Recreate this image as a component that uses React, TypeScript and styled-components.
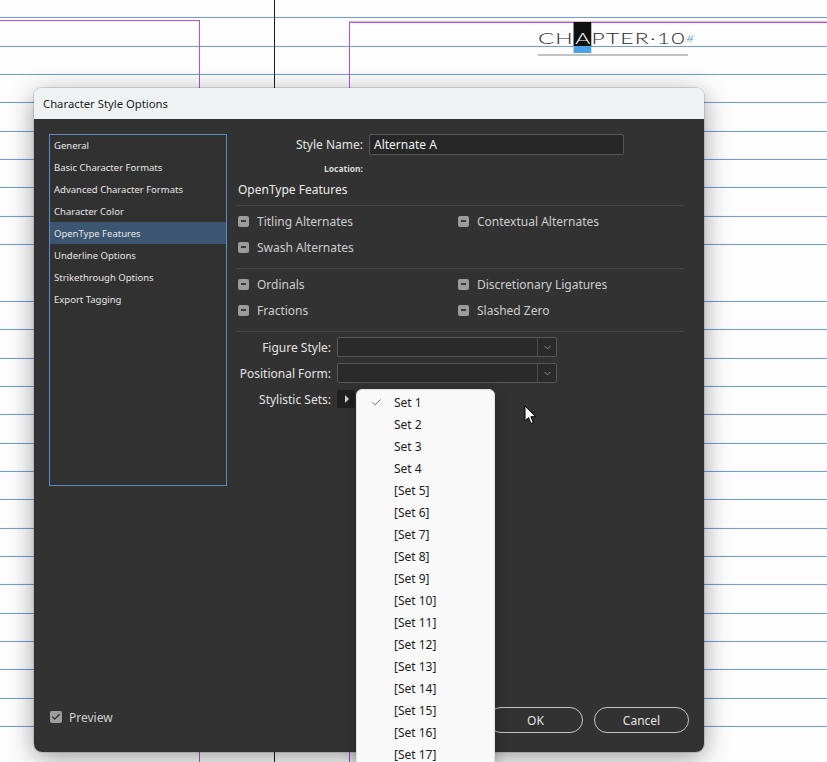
import styled, { createGlobalStyle } from 'styled-components';
import { Check, ChevronDown } from 'lucide-react';

const GlobalStyle = createGlobalStyle`
  html, body {
    margin: 0;
    padding: 0;
    height: 100%;
    overflow: hidden;
    background: #fdfdfd;
  }
  #root {
    height: 762px;
  }
`;

const uiFont = `'Noto Sans', 'Open Sans', 'Liberation Sans', sans-serif`;

const Desktop = styled.div`
  position: relative;
  width: 827px;
  height: 762px;
  overflow: hidden;
  background-color: #fdfdfd;
  background-image: repeating-linear-gradient(
    to bottom,
    transparent 0,
    transparent 27.35px,
    #6a97de 27.35px,
    #6a97de 28.35px
  );
  background-position: 0 -10.05px;
  font-family: ${uiFont};
`;

// page frames on the pasteboard (free canvas)
const PageFrame = styled.div<{ $left: number; $top: number; $width: number; $side: 'left' | 'right' }>`
  position: absolute;
  left: ${(p) => p.$left}px;
  top: ${(p) => p.$top}px;
  width: ${(p) => p.$width}px;
  bottom: -2px;
  border-top: 1px solid #b84fe3;
  ${(p) => (p.$side === 'left' ? 'border-right: 1px solid #b84fe3;' : 'border-left: 1px solid #b84fe3;')}
  ${(p) => (p.$side === 'right' ? 'box-shadow: 0 -1px 0 rgba(226, 122, 150, 0.55);' : '')}
`;

const Spine = styled.div`
  position: absolute;
  left: 274px;
  top: 0;
  bottom: 0;
  width: 1px;
  background: #1b1b1b;
`;

const ChapterHeading = styled.div`
  position: absolute;
  left: 538px;
  top: 26px;
  display: flex;
  flex-direction: column;
  align-items: flex-start;
`;

const ChapterText = styled.div`
  font-family: Lato, 'Liberation Sans', sans-serif;
  font-weight: 300;
  font-size: 15.5px;
  letter-spacing: 0.8px;
  line-height: 24px;
  color: #2b2b2b;
  white-space: nowrap;
  display: flex;
  align-items: flex-end;
  transform: scaleX(1.48);
  transform-origin: left center;
`;

const ChapterCap = styled.span`
  font-size: 16px;
`;

const SelectedGlyph = styled.span`
  display: inline-block;
  background: linear-gradient(#101010 0 79%, #4ba2e8 79%);
  color: #fff;
  padding: 4px 0 3px 1px;
  margin: -4px 0 -3px;
  line-height: 24px;
`;

const PilcrowMark = styled.span`
  font-size: 10px;
  color: #4a8fe0;
  letter-spacing: 0;
`;

const ChapterRule = styled.div`
  margin-top: 4px;
  width: 150px;
  height: 2px;
  background: #c2c2c2;
`;

const Dialog = styled.div`
  position: absolute;
  left: 34px;
  top: 88px;
  width: 670px;
  height: 664px;
  border-radius: 8px;
  overflow: hidden;
  display: flex;
  flex-direction: column;
  box-shadow: 0 6px 26px rgba(0, 0, 0, 0.38), 0 0 0 1px rgba(0, 0, 0, 0.12);
`;

const TitleBar = styled.div`
  height: 31px;
  flex: none;
  display: flex;
  align-items: center;
  padding-left: 9px;
  background: #eff2f3;
  color: #1c1c1c;
  font-size: 11.3px;
`;

const DialogBody = styled.div`
  flex: 1;
  background: #323232;
  display: flex;
  flex-direction: column;
  padding: 15px 20px 19px 15px;
`;

const MainRow = styled.div`
  display: flex;
  gap: 9px;
`;

const CategoryList = styled.ul`
  list-style: none;
  margin: 0;
  padding: 0;
  width: 178px;
  height: 352px;
  box-sizing: border-box;
  border: 1px solid #5d8cc4;
  background: #313131;
`;

const CategoryItem = styled.li<{ $active?: boolean }>`
  height: 22px;
  display: flex;
  align-items: center;
  padding-left: 4px;
  font-size: 9.5px;
  color: #e6e6e6;
  background: ${(p) => (p.$active ? '#3c5570' : 'transparent')};
  &:first-child {
    margin-top: -1px;
  }
`;

const OptionsPanel = styled.div`
  flex: 1;
  display: flex;
  flex-direction: column;
`;

const FieldRow = styled.div<{ $labelWidth: number }>`
  display: grid;
  grid-template-columns: ${(p) => p.$labelWidth}px auto;
  column-gap: 6px;
  align-items: center;
`;

const FieldLabel = styled.span`
  text-align: right;
  font-size: 12px;
  color: #e2e2e2;
  white-space: nowrap;
`;

const NameInput = styled.div`
  width: 255px;
  height: 21px;
  box-sizing: border-box;
  border: 1px solid #585858;
  border-radius: 2px;
  background: #272727;
  color: #f0f0f0;
  font-size: 12px;
  display: flex;
  align-items: center;
  padding-left: 4px;
`;

const LocationLabel = styled.div`
  width: 127px;
  margin-top: 8px;
  height: 12px;
  line-height: 12px;
  text-align: right;
  font-size: 8.5px;
  font-weight: 700;
  color: #dadada;
`;

const SectionHeading = styled.div`
  margin-top: 7px;
  padding-left: 2px;
  line-height: 16px;
  font-size: 12px;
  color: #ececec;
`;

const Divider = styled.div<{ $gap?: number }>`
  height: 1px;
  margin-top: ${(p) => p.$gap ?? 0}px;
  background: #474747;
`;

const FeatureGrid = styled.div`
  display: grid;
  grid-template-columns: 220px 1fr;
  grid-auto-rows: 26px;
  padding: 2px 0 8px 2px;
`;

const FeatureItem = styled.div`
  display: flex;
  align-items: center;
  gap: 8px;
  font-size: 12px;
  color: #cdcdcd;
`;

const MixedBox = styled.span`
  width: 11px;
  height: 11px;
  border-radius: 2px;
  background: #9b9b9b;
  display: flex;
  align-items: center;
  justify-content: center;
  &::after {
    content: '';
    width: 5px;
    height: 2px;
    background: #3a3a3a;
  }
`;

const FormStack = styled.div`
  margin-top: 5px;
  display: flex;
  flex-direction: column;
  gap: 6px;
`;

const SelectBox = styled.div`
  width: 220px;
  height: 20px;
  box-sizing: border-box;
  border: 1px solid #575757;
  border-radius: 2px;
  background: #2a2a2a;
  display: flex;
  justify-content: flex-end;
`;

const SelectChevron = styled.span`
  width: 18px;
  border-left: 1px solid #4a4a4a;
  display: flex;
  align-items: center;
  justify-content: center;
  color: #b5b5b5;
`;

const DisclosureButton = styled.span`
  width: 18px;
  height: 18px;
  border-radius: 2px;
  background: #1f1f1f;
  display: flex;
  align-items: center;
  justify-content: center;
  &::after {
    content: '';
    border-left: 4px solid #cfcfcf;
    border-top: 4px solid transparent;
    border-bottom: 4px solid transparent;
    margin-left: 1px;
  }
`;

const FooterRow = styled.div`
  margin-top: auto;
  margin-right: -5px;
  height: 26px;
  display: flex;
  align-items: center;
  justify-content: space-between;
`;

const PreviewToggle = styled.label`
  display: flex;
  align-items: center;
  gap: 7px;
  margin: 0 0 6px 1px;
  font-size: 12px;
  color: #cfcfcf;
`;

const CheckedBox = styled.span`
  width: 12px;
  height: 12px;
  border-radius: 2px;
  background: #9d9d9d;
  color: #2f2f2f;
  display: flex;
  align-items: center;
  justify-content: center;
`;

const ButtonGroup = styled.div`
  display: flex;
  gap: 11px;
`;

const PillButton = styled.button`
  width: 95px;
  height: 26px;
  box-sizing: border-box;
  border: 1.5px solid #c4c4c4;
  border-radius: 13px;
  background: transparent;
  color: #e4e4e4;
  font-family: ${uiFont};
  font-size: 12px;
  padding: 0;
`;

const SetMenu = styled.ul`
  position: absolute;
  left: 356px;
  top: 389px;
  width: 137px;
  margin: 0;
  padding: 1px 0 0;
  list-style: none;
  background: #f9f9f9;
  border: 1px solid #e2e2e2;
  border-radius: 6px;
  box-shadow: 0 4px 14px rgba(0, 0, 0, 0.28);
  z-index: 5;
`;

const SetMenuItem = styled.li`
  height: 22px;
  display: flex;
  align-items: center;
  font-size: 12px;
  color: #1b1b1b;
`;

const CheckSlot = styled.span`
  width: 36px;
  display: flex;
  justify-content: center;
  padding-left: 1px;
  color: #333;
`;

const Pointer = styled.svg`
  position: absolute;
  left: 524px;
  top: 405px;
  z-index: 6;
`;

const categories = [
  'General',
  'Basic Character Formats',
  'Advanced Character Formats',
  'Character Color',
  'OpenType Features',
  'Underline Options',
  'Strikethrough Options',
  'Export Tagging',
];

const featureGroups = [
  ['Titling Alternates', 'Contextual Alternates', 'Swash Alternates', ''],
  ['Ordinals', 'Discretionary Ligatures', 'Fractions', 'Slashed Zero'],
];

const stylisticSets = Array.from({ length: 17 }, (_, i) => (i < 4 ? `Set ${i + 1}` : `[Set ${i + 1}]`));

export default function App() {
  return (
    <Desktop>
      <GlobalStyle />
      <PageFrame $side="left" $left={-1} $top={20} $width={200} />
      <PageFrame $side="right" $left={349} $top={22} $width={490} />
      <Spine />

      <ChapterHeading>
        <ChapterText>
          <ChapterCap>C</ChapterCap>H<SelectedGlyph>A</SelectedGlyph>PTER·10
          <PilcrowMark>#</PilcrowMark>
        </ChapterText>
        <ChapterRule />
      </ChapterHeading>

      <Dialog>
        <TitleBar>Character Style Options</TitleBar>
        <DialogBody>
          <MainRow>
            <CategoryList>
              {categories.map((name) => (
                <CategoryItem key={name} $active={name === 'OpenType Features'}>
                  {name}
                </CategoryItem>
              ))}
            </CategoryList>

            <OptionsPanel>
              <FieldRow $labelWidth={127}>
                <FieldLabel>Style Name:</FieldLabel>
                <NameInput>Alternate A</NameInput>
              </FieldRow>
              <LocationLabel>Location:</LocationLabel>
              <SectionHeading>OpenType Features</SectionHeading>
              <Divider $gap={7} />
              {featureGroups.map((group, gi) => (
                <div key={gi}>
                  <FeatureGrid>
                    {group.map((label, i) =>
                      label ? (
                        <FeatureItem key={label}>
                          <MixedBox />
                          {label}
                        </FeatureItem>
                      ) : (
                        <span key={`empty-${i}`} />
                      ),
                    )}
                  </FeatureGrid>
                  <Divider />
                </div>
              ))}

              <FormStack>
                <FieldRow $labelWidth={95}>
                  <FieldLabel>Figure Style:</FieldLabel>
                  <SelectBox>
                    <SelectChevron>
                      <ChevronDown size={11} strokeWidth={1.5} />
                    </SelectChevron>
                  </SelectBox>
                </FieldRow>
                <FieldRow $labelWidth={95}>
                  <FieldLabel>Positional Form:</FieldLabel>
                  <SelectBox>
                    <SelectChevron>
                      <ChevronDown size={11} strokeWidth={1.5} />
                    </SelectChevron>
                  </SelectBox>
                </FieldRow>
                <FieldRow $labelWidth={95} style={{ marginTop: 1 }}>
                  <FieldLabel>Stylistic Sets:</FieldLabel>
                  <DisclosureButton />
                </FieldRow>
              </FormStack>
            </OptionsPanel>
          </MainRow>

          <FooterRow>
            <PreviewToggle>
              <CheckedBox>
                <Check size={10} strokeWidth={3} />
              </CheckedBox>
              Preview
            </PreviewToggle>
            <ButtonGroup>
              <PillButton>OK</PillButton>
              <PillButton>Cancel</PillButton>
            </ButtonGroup>
          </FooterRow>
        </DialogBody>
      </Dialog>

      <SetMenu>
        {stylisticSets.map((label, i) => (
          <SetMenuItem key={label}>
            <CheckSlot>{i === 0 ? <Check size={11} strokeWidth={1.6} /> : null}</CheckSlot>
            {label}
          </SetMenuItem>
        ))}
      </SetMenu>

      <Pointer width="13" height="20" viewBox="0 0 13 20">
        <path d="M1 1 L1 16 L4.5 12.5 L7 18.5 L9.3 17.5 L6.8 11.7 L11.6 11.7 Z" fill="#fff" stroke="#000" strokeWidth="1" strokeLinejoin="round" />
      </Pointer>
    </Desktop>
  );
}
